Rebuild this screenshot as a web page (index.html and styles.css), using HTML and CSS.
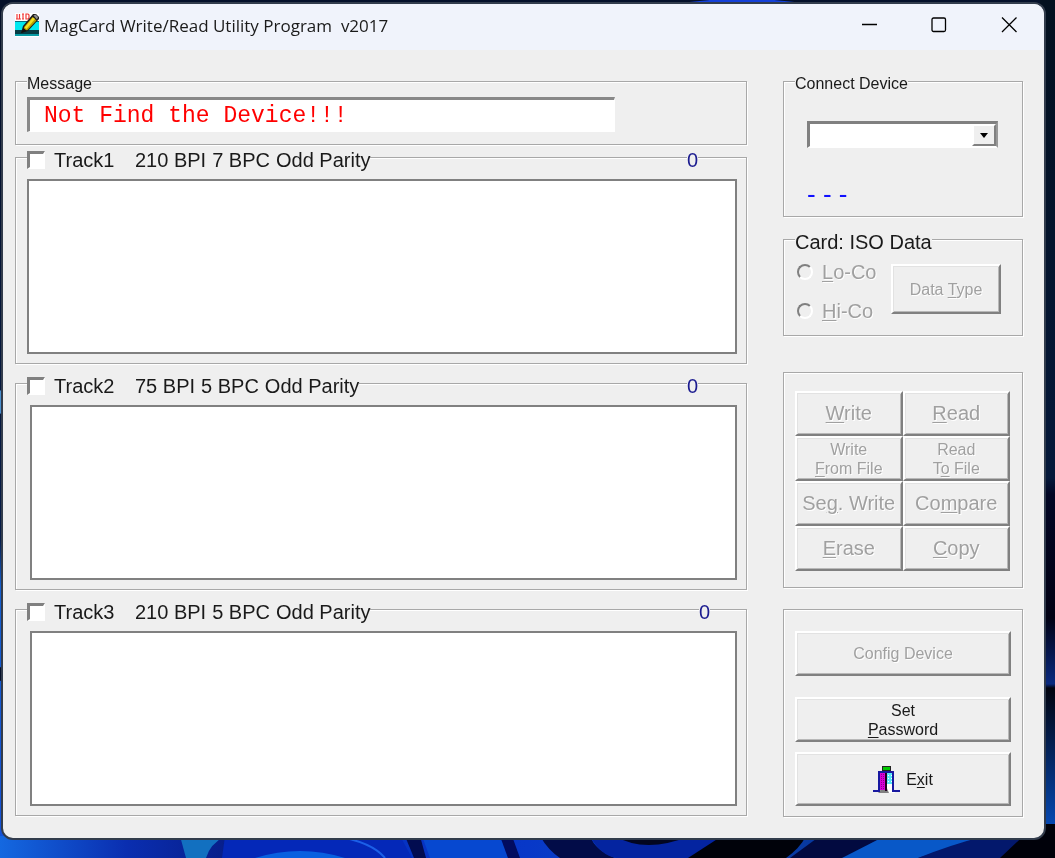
FILE: index.html
```html
<!DOCTYPE html>
<html lang="en">
<head>
  <meta charset="UTF-8" />
  <title>MagCard Write/Read Utility Program v2017</title>
  <link rel="stylesheet" href="styles.css">
</head>
<body>
  <svg class="wallpaper" viewBox="0 0 1055 858" preserveAspectRatio="none" aria-hidden="true">
    <defs>
      <linearGradient id="left" x1="0" y1="0" x2="0" y2="1">
        <stop offset="0" stop-color="#04102a" />
        <stop offset="0.6" stop-color="#061c48" />
        <stop offset="0.66" stop-color="#1560d0" />
        <stop offset="1" stop-color="#1450d8" />
      </linearGradient>
      <linearGradient id="right" x1="0" y1="0" x2="0" y2="1">
        <stop offset="0" stop-color="#03101f" />
        <stop offset="0.58" stop-color="#05183a" />
        <stop offset="0.6" stop-color="#020624" />
        <stop offset="0.75" stop-color="#010114" />
        <stop offset="0.83" stop-color="#0a2a80" />
        <stop offset="0.835" stop-color="#01030f" />
        <stop offset="1" stop-color="#0648b0" />
      </linearGradient>
      <linearGradient id="bloom">
        <stop offset="0" stop-color="#1468e0" />
        <stop offset="0.12" stop-color="#0a2eb0" />
        <stop offset="0.25" stop-color="#06187c" />
        <stop offset="0.28" stop-color="#1270c8" />
        <stop offset="0.33" stop-color="#0530c0" />
        <stop offset="0.5" stop-color="#0838c8" />
        <stop offset="0.65" stop-color="#0a48c0" />
        <stop offset="1" stop-color="#021a60" />
      </linearGradient>
    </defs>
    <rect width="1055" height="858" fill="#04102a" />
    <ellipse cx="742" cy="14" rx="90" ry="15" fill="#1440d8" />
    <rect y="60" width="4" height="798" fill="url(#left)" />
    <ellipse cx="0" cy="402" rx="3" ry="12" fill="#4a90d0" />
    <ellipse cx="0" cy="674" rx="3" ry="7" fill="#04102a" />
    <rect x="1040" width="15" height="824" fill="url(#right)" />
    <rect y="836" width="1055" height="22" fill="url(#bloom)" />
    <path d="M180 836 H225 Q210 844 206 858 H186 Z" fill="#1270c0" />
    <path d="M225 836 H400 L412 858 H222 Z" fill="#0428b8" />
    <path d="M255 858 Q300 844 345 858 Z" fill="#0860e0" />
    <path d="M335 836 Q372 842 385 858" fill="none" stroke="#1c60e8" stroke-width="2" />
    <path d="M405 836 H420 L426 858 H414 Z" fill="#020c50" />
    <path d="M422 836 H500 L508 858 H430 Z" fill="#0648d0" />
    <path d="M500 836 H512 L520 858 H508 Z" fill="#020c60" />
    <path d="M540 836 Q548 850 560 858 H615 Q595 850 590 836 Z" fill="#020c48" />
    <path d="M590 836 Q600 855 616 858 H760 V836 Z" fill="#0424a0" />
    <path d="M615 836 Q645 854 690 836 Z" fill="#020620" />
    <path d="M722 836 H806 Q800 848 786 858 H688 Z" fill="#00020a" />
    <path d="M820 836 H885 L845 858 H790 Z" fill="#020a40" />
    <path d="M885 836 H985 L918 858 H842 Z" fill="#0858c8" />
    <path d="M985 836 Q950 845 918 858 H1000 L1036 836 Z" fill="#03186c" />
    <path d="M1036 824 H1055 V858 H1000 Z" fill="#00010a" />
  </svg>

  <div class="window">
    <header class="titlebar">
      <svg class="app-icon" viewBox="0 0 24 24" aria-hidden="true">
        <rect width="24" height="24" fill="#fff" />
        <rect x="0" y="9" width="24" height="9" fill="#00e8f0" />
        <rect x="0" y="8" width="24" height="1" fill="#087080" />
        <rect x="0" y="17" width="24" height="4" fill="#063c44" />
        <rect x="0" y="21" width="24" height="2" fill="#089aa4" />
        <path d="M2 1 V6 M4.500 1 V6 M1 6 H6 M8 1 V6 M7 1 H9 M7 6 H9 M11 1 H13 L14 2 V5 L13 6 H11 Z" fill="none" stroke="#f03838" stroke-width="1.200" />
        <path d="M6 20 L8 13 L18 1 H21 L24 4 V6 L13 18 Z" fill="#1c1c1c" />
        <path d="M8 18 L9.500 13.500 L17.500 4 L21.500 7.500 L12.500 17 Z" fill="#b8a000" />
        <path d="M9.500 14.500 L18 4.500 L20 6 L11.500 16 Z" fill="#f4e020" />
        <path d="M18.500 2.500 L20.500 1.500 L23 4 L22 6.500 Z" fill="#909090" />
        <path d="M6 20 L8.500 15 L12 18 Z" fill="#111" />
      </svg>
      <h1>MagCard Write/Read Utility Program&nbsp; v2017</h1>
      <button class="caption" aria-label="Minimize">
        <svg viewBox="0 0 16 16"><path d="M1 7.500 H16" /></svg>
      </button>
      <button class="caption" aria-label="Maximize">
        <svg viewBox="0 0 16 16"><rect x="1" y="1" width="13.500" height="13.500" rx="1.500" /></svg>
      </button>
      <button class="caption" aria-label="Close">
        <svg viewBox="0 0 16 16"><path d="M1 0.500 L15.500 15 M15.500 0.500 L1 15" /></svg>
      </button>
    </header>

    <main>
      <div class="column tracks">
        <fieldset class="message">
          <legend>Message</legend>
          <input type="text" aria-label="Message" value="Not Find the Device!!!" readonly>
        </fieldset>

        <fieldset class="track first">
          <legend class="large">
            <input type="checkbox" id="track1">
            <label for="track1"><span class="name">Track1</span><span>210 BPI</span><span>7 BPC</span><span>Odd Parity</span></label>
          </legend>
          <output class="count" for="data1">0</output>
          <textarea id="data1" aria-label="Track1 data"></textarea>
        </fieldset>

        <fieldset class="track">
          <legend class="large">
            <input type="checkbox" id="track2">
            <label for="track2"><span class="name">Track2</span><span>75 BPI</span><span>5 BPC</span><span>Odd Parity</span></label>
          </legend>
          <output class="count" for="data2">0</output>
          <textarea id="data2" aria-label="Track2 data"></textarea>
        </fieldset>

        <fieldset class="track last">
          <legend class="large">
            <input type="checkbox" id="track3">
            <label for="track3"><span class="name">Track3</span><span>210 BPI</span><span>5 BPC</span><span>Odd Parity</span></label>
          </legend>
          <output class="count" for="data3">0</output>
          <textarea id="data3" aria-label="Track3 data"></textarea>
        </fieldset>
      </div>

      <div class="column side">
        <fieldset class="connect">
          <legend>Connect Device</legend>
          <div class="combo">
            <select aria-label="Connect Device"><option></option></select>
            <span class="arrow"><svg viewBox="0 0 8 5"><path d="M0 0 H8 L4 5 Z" /></svg></span>
          </div>
          <p class="status">- - -</p>
        </fieldset>

        <fieldset class="card">
          <legend class="large">Card: ISO Data</legend>
          <div class="radios">
            <label><input type="radio" name="coercivity" disabled><span><u>L</u>o-Co</span></label>
            <label><input type="radio" name="coercivity" disabled><span><u>H</u>i-Co</span></label>
          </div>
          <button class="btn small" disabled><span>Data <u>T</u>ype</span></button>
        </fieldset>

        <fieldset class="actions">
          <button class="btn" disabled><span><u>W</u>rite</span></button>
          <button class="btn" disabled><span><u>R</u>ead</span></button>
          <button class="btn small" disabled><span>Write<br><u>F</u>rom File</span></button>
          <button class="btn small" disabled><span>Read<br>T<u>o</u> File</span></button>
          <button class="btn" disabled><span>Se<u>g</u>. Write</span></button>
          <button class="btn" disabled><span>Co<u>m</u>pare</span></button>
          <button class="btn" disabled><span><u>E</u>rase</span></button>
          <button class="btn" disabled><span><u>C</u>opy</span></button>
        </fieldset>

        <fieldset class="system">
          <button class="btn small config" disabled><span>Config Device</span></button>
          <button class="btn small"><span>Set<br><u>P</u>assword</span></button>
          <button class="btn small exit">
            <svg viewBox="0 0 27 27" aria-hidden="true">
              <defs>
                <pattern id="door" width="2" height="2" patternUnits="userSpaceOnUse">
                  <rect width="2" height="2" fill="#d800d8" />
                  <rect width="1" height="1" fill="#900090" />
                </pattern>
                <pattern id="sky" width="3" height="3" patternUnits="userSpaceOnUse">
                  <rect width="3" height="3" fill="#58e8f8" />
                  <rect width="1" height="1" fill="#fff" />
                </pattern>
              </defs>
              <rect x="9" y="0" width="9" height="5" fill="#222" />
              <rect x="10" y="1" width="7" height="3" fill="#00c800" />
              <rect x="13" y="7" width="6" height="11" fill="url(#sky)" />
              <path d="M13 18 H19 V25 H22 V27 H16 L13 24 Z" fill="#fff" />
              <path d="M5 26 L13 20 L16 27 H6 Z" fill="#808080" />
              <rect x="7" y="7" width="6" height="17" fill="url(#door)" />
              <path d="M13 7 V25" stroke="#200020" stroke-width="2" />
              <path d="M0 25 H6 V6 H20 V25 H27" fill="none" stroke="#1818a0" stroke-width="2" />
            </svg>
            <span>E<u>x</u>it</span>
          </button>
        </fieldset>
      </div>
    </main>
  </div>
</body>
</html>
```

FILE: styles.css
```css
* {
  box-sizing: border-box;
}
body {
  display: flex;
  min-height: 100vh;
  margin: 0;
  padding: 2px 9px 18px 1px;
  font-family: "Liberation Sans", Arial, sans-serif;
  font-size: 16px;
  color: #1a1a1a;
  background: #04102a;
}
.wallpaper {
  position: fixed;
  inset: 0;
  width: 100%;
  height: 100%;
  z-index: -1;
}
.window {
  flex: 1;
  border: 2px solid #323c4c;
  border-radius: 12px;
  background: #efefef;
  overflow: hidden;
}

/* title bar */
.titlebar {
  display: flex;
  align-items: center;
  height: 46px;
  padding: 0 0 4px 12px;
  background: #f0f3fb;
}
.app-icon {
  width: 24px;
  height: 24px;
}
h1 {
  flex: 1;
  margin: 0 0 0 5px;
  font-family: "Open Sans", "Segoe UI", sans-serif;
  font-size: 17px;
  font-weight: normal;
}
.caption {
  width: 70px;
  height: 42px;
  padding: 0;
  border: none;
  background: none;
}
.caption svg {
  display: block;
  width: 16px;
  height: 16px;
  margin: 0 auto;
  fill: none;
  stroke: #000;
  stroke-width: 1.3;
}

/* group boxes */
main {
  display: grid;
  grid-template-columns: 1fr 240px;
  gap: 36px;
  padding: 31px 21px 21px 12px;
}
.column {
  display: flex;
  flex-direction: column;
}
.tracks {
  gap: 19px;
}
.side {
  gap: 22px;
}
fieldset {
  position: relative;
  min-width: 0;
  margin: 0;
  padding: 0;
  border: 1px solid #a8a8a8;
  box-shadow: 1px 1px 0 #fff, inset 1px 1px 0 #fff;
}
legend {
  position: absolute;
  top: -8px;
  left: 11px;
  padding: 0;
  line-height: 20px;
  background: #efefef;
}
.large {
  display: flex;
  align-items: center;
  font-size: 20px;
}
.message {
  margin-bottom: -7px;
  padding: 15px 11px 12px;
}
.message input {
  display: block;
  width: 100%;
  max-width: 588px;
  height: 35px;
  padding: 0 14px;
  border: solid;
  border-width: 3px 1px 1px 3px;
  border-color: #888 #fff #fff #888;
  background: #fff;
  color: #ff0000;
  font-family: "Liberation Mono", "Courier New", monospace;
  font-size: 23px;
  outline: none;
}
.track {
  padding: 21px 9px 9px 14px;
}
.track.first {
  padding-left: 11px;
}
.track input {
  appearance: none;
  width: 18px;
  height: 18px;
  margin: 0 9px 0 0;
  border: solid;
  border-width: 3px 2px 2px 3px;
  border-color: #808080 #fff #fff #808080;
  background: #fff;
}
.track label {
  display: flex;
  gap: 6px;
}
.name {
  width: 75px;
}
.count {
  position: absolute;
  top: -8px;
  right: 48px;
  line-height: 20px;
  font-size: 20px;
  color: #1c1c90;
  background: #efefef;
}
.last .count {
  right: 36px;
}
textarea {
  display: block;
  width: 100%;
  height: 175px;
  border: 2px solid #808080;
  background: #fff;
  resize: none;
}

/* device */
.connect {
  height: 136px;
  padding: 39px 24px 0 23px;
}
.combo {
  position: relative;
  border: solid;
  border-width: 3px 2px 2px 3px;
  border-color: #808080 #989898 #fff #808080;
  background: #fff;
}
.combo select {
  display: block;
  appearance: none;
  width: 100%;
  height: 22px;
  border: none;
  background: #fff;
}
.arrow {
  position: absolute;
  top: 0;
  right: 0;
  bottom: 0;
  display: flex;
  align-items: center;
  justify-content: center;
  width: 24px;
  border: 2px solid;
  border-color: #fff #808080 #808080 #fff;
  background: #efefef;
  pointer-events: none;
}
.arrow svg {
  width: 8px;
  height: 5px;
}
.status {
  margin: 33px 0 0;
  font-size: 26px;
  line-height: 26px;
  color: #1010ff;
}

/* card */
.card {
  display: flex;
  justify-content: space-between;
  height: 97px;
  padding: 24px 21px 21px 13px;
}
.card .btn {
  width: 110px;
  height: 50px;
}
.radios {
  display: flex;
  flex-direction: column;
  gap: 19px;
  margin-top: -2px;
}
.radios label {
  display: flex;
  align-items: center;
  height: 20px;
  font-size: 20px;
  color: #a0a0a0;
  text-shadow: 1px 1px 0 #fff;
}
.radios input {
  appearance: none;
  width: 16px;
  height: 16px;
  margin: 0 9px 0 0;
  border: 2px solid;
  border-color: #808080 #fff #fff #808080;
  border-radius: 50%;
}

/* buttons */
.btn {
  padding: 0;
  border: 2px solid;
  border-color: #fff #808080 #808080 #fff;
  box-shadow: inset 1px 1px 0 #e2e2e2, inset -1px -1px 0 #b8b8b8;
  background: #efefef;
  color: #1a1a1a;
  font-family: inherit;
  font-size: 20px;
}
.btn:disabled {
  color: #a0a0a0;
  text-shadow: 1px 1px 0 #fff;
}
.btn.small {
  font-size: 16px;
  line-height: 19px;
}
u {
  text-underline-offset: 2px;
  text-decoration-thickness: 1px;
}
.actions {
  display: grid;
  grid-template-columns: 1fr 1fr;
  grid-auto-rows: 45px;
  margin-top: 14px;
  padding: 18px 12px 16px 11px;
}
.system {
  display: flex;
  flex-direction: column;
  margin-top: -1px;
  padding: 21px 11px 10px;
}
.system .btn {
  height: 45px;
}
.system .config {
  margin-bottom: 21px;
}
.system .exit {
  display: flex;
  align-items: center;
  justify-content: center;
  gap: 6px;
  height: 54px;
  margin-top: 10px;
}
.exit svg {
  width: 27px;
  height: 27px;
}
```
